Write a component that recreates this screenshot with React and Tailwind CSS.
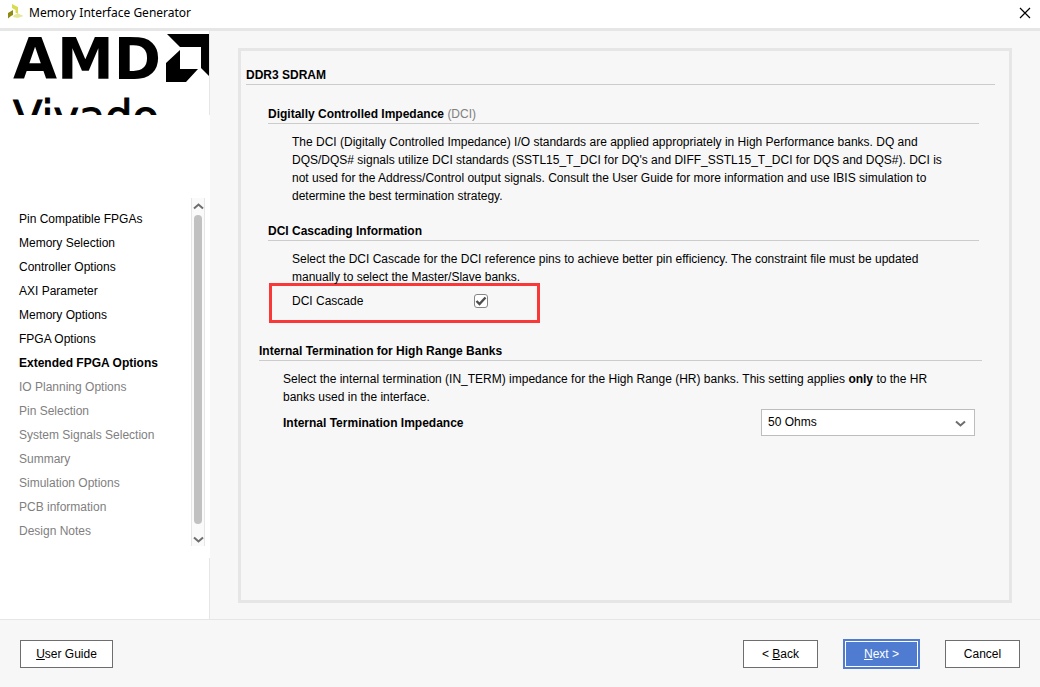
const steps = [
    'Pin Compatible FPGAs',
    'Memory Selection',
    'Controller Options',
    'AXI Parameter',
    'Memory Options',
    'FPGA Options',
    'Extended FPGA Options',
    'IO Planning Options',
    'Pin Selection',
    'System Signals Selection',
    'Summary',
    'Simulation Options',
    'PCB information',
    'Design Notes',
];
const currentStep = 6;

function Chevron({ up = false, className = '' }) {
    return (
        <svg width="11" height="7" viewBox="0 0 11 7" className={className} aria-hidden="true">
            <path
                d={up ? 'M1 5.5 L5.5 1.5 L10 5.5' : 'M1 1.5 L5.5 5.5 L10 1.5'}
                fill="none"
                stroke="#6e6e6e"
                strokeWidth="2"
            />
        </svg>
    );
}

function TitleBar() {
    return (
        <header className="flex h-[31px] items-center justify-between border-b-[3px] border-[#e6e6e6] bg-white pb-0.5 pl-2 pr-[7px]">
            <div className="flex items-center gap-[5px]">
                <svg width="16" height="18" viewBox="0 0 16 18" aria-hidden="true">
                    <path d="M4 0 L10 3 V10 L7.5 8.5 V6 L4 4 Z" fill="#d9dc52" />
                    <path d="M0 9 L5 6 V11 L3 12 L0 14.5 Z" fill="#8f8a12" />
                    <path d="M6 11 L10 9.5 L15.5 12 L9.5 14 L5 13 Z" fill="#e6e79a" />
                </svg>
                <h1 className="font-['Noto_Sans',sans-serif] text-[12px] leading-4">Memory Interface Generator</h1>
            </div>
            <button type="button" aria-label="Close" className="flex h-5 w-4 items-center justify-center">
                <svg width="12" height="12" viewBox="0 0 12 12" aria-hidden="true">
                    <path d="M1 1 L11 11 M11 1 L1 11" stroke="#000" strokeWidth="1.2" />
                </svg>
            </button>
        </header>
    );
}

function Logo() {
    return (
        <div className="h-[84px] overflow-hidden border-r border-[#e6e6e6]">
            <svg width="209" height="84" viewBox="0 0 209 84" role="img" aria-label="AMD Vivado">
                <text x="13" y="48" fontFamily="DejaVu Sans" fontWeight="700" fontSize="57">AMD</text>
                <path d="M167 3 H209 V45 L201 37 V16 H180 Z" />
                <path d="M180 19 V38 H198 L186 51 H166 V32 Z" />
                <text x="13" y="100" fontFamily="DejaVu Sans" fontSize="43" stroke="#000" strokeWidth="1">Vivado</text>
            </svg>
        </div>
    );
}

function Sidebar() {
    return (
        <aside className="flex w-[210px] shrink-0 flex-col bg-white">
            <Logo />
            <div className="mt-[83px] flex h-[348px] justify-between pr-[5px]">
                <nav className="pl-[19px] pt-[9px]">
                    <ol>
                        {steps.map((step, i) => (
                            <li
                                key={step}
                                aria-current={i === currentStep ? 'step' : undefined}
                                className={`leading-6 whitespace-nowrap ${i === currentStep ? 'font-bold' : ''} ${i > currentStep ? 'text-[#808080]' : ''}`}
                            >
                                {step}
                            </li>
                        ))}
                    </ol>
                </nav>
                <div className="flex w-[14px] flex-col items-center border-x border-[#e6e6e6] bg-[#fafafa]">
                    <Chevron up className="my-[5px]" />
                    <div className="w-2 flex-1 rounded-full bg-[#c1c1c1]" />
                    <Chevron className="mb-[3px] mt-[12px]" />
                </div>
            </div>
            <div className="mt-3 flex-1 border-r border-[#e6e6e6]" />
        </aside>
    );
}

function Section({ title, note, className, children }) {
    return (
        <section className={className}>
            <h3 className="border-b border-[#cccccc] font-bold leading-[18px]">
                {title}
                {note && <span className="font-normal text-[#808080]"> {note}</span>}
            </h3>
            {children}
        </section>
    );
}

function Content() {
    return (
        <main className="mx-7 mb-4 mt-[17px] flex-1 border-[3px] border-[#e6e6e6] pl-[5px] pr-[14px] pt-[15px]">
            <h2 className="border-b border-[#cccccc] font-bold leading-[18px]">DDR3 SDRAM</h2>

            <Section title="Digitally Controlled Impedance" note="(DCI)" className="ml-[22px] mr-4 mt-5">
                <p className="ml-6 mr-5 mt-[9px] leading-[18px]">
                    The DCI (Digitally Controlled Impedance) I/O standards are applied appropriately in High
                    Performance banks. DQ and DQS/DQS# signals utilize DCI standards (SSTL15_T_DCI for DQ's and
                    DIFF_SSTL15_T_DCI for DQS and DQS#). DCI is not used for the Address/Control output signals.
                    Consult the User Guide for more information and use IBIS simulation to determine the best
                    termination strategy.
                </p>
            </Section>

            <Section title="DCI Cascading Information" className="ml-[22px] mr-4 mt-[17px]">
                <p className="ml-6 mr-5 mt-[9px] leading-[18px]">
                    Select the DCI Cascade for the DCI reference pins to achieve better pin efficiency. The
                    constraint file must be updated manually to select the Master/Slave banks.
                </p>
                <div className="-mt-[3px] ml-px flex h-10 w-[271px] items-center border-[3px] border-[#fb3838] pb-1 pl-5">
                    <label htmlFor="cascade" className="w-[182px]">DCI Cascade</label>
                    <span className="relative flex">
                        <input
                            id="cascade"
                            type="checkbox"
                            defaultChecked
                            className="peer size-[14px] appearance-none rounded-[3px] border border-[#858585] bg-white"
                        />
                        <svg
                            viewBox="0 0 14 14"
                            className="pointer-events-none absolute inset-0 hidden size-[14px] peer-checked:block"
                            aria-hidden="true"
                        >
                            <path d="M2.5 7 L5.5 10 L11.5 3.5" fill="none" stroke="#4d4d4d" strokeWidth="2.4" />
                        </svg>
                    </span>
                </div>
            </Section>

            <Section title="Internal Termination for High Range Banks" className="ml-[13px] mr-[13px] mt-[19px]">
                <p className="ml-6 mr-6 mt-[9px] leading-[18px]">
                    Select the internal termination (IN_TERM) impedance for the High Range (HR) banks. This
                    setting applies <b>only</b> to the HR banks used in the interface.
                </p>
                <div className="ml-6 mr-[7px] mt-[3px] flex items-center justify-between">
                    <label htmlFor="impedance" className="font-bold">Internal Termination Impedance</label>
                    <span className="relative flex">
                        <select
                            id="impedance"
                            defaultValue="50"
                            className="h-[27px] w-[214px] appearance-none border border-[#bdbdbd] bg-white pb-0.5 pl-1.5"
                        >
                            <option value="40">40 Ohms</option>
                            <option value="50">50 Ohms</option>
                            <option value="60">60 Ohms</option>
                        </select>
                        <Chevron className="pointer-events-none absolute right-[9px] top-[11px]" />
                    </span>
                </div>
            </Section>
        </main>
    );
}

const buttonClass = 'h-7 border border-[#6e6e6e] bg-white';

function Footer() {
    return (
        <footer className="flex h-[68px] items-center justify-between border-t border-[#e6e6e6] px-5">
            <button type="button" className={`${buttonClass} w-[93px]`}>
                <u>U</u>ser Guide
            </button>
            <div className="flex items-center gap-[25px]">
                <button type="button" className={`${buttonClass} w-[75px]`}>
                    &lt; <u>B</u>ack
                </button>
                <button
                    type="button"
                    className="h-[30px] w-[77px] border-2 border-[#4f7cd1] bg-[#4f7cd1] text-white shadow-[inset_0_0_0_1px_white]"
                >
                    <u>N</u>ext &gt;
                </button>
                <button type="button" className={`${buttonClass} w-[75px]`}>
                    Cancel
                </button>
            </div>
        </footer>
    );
}

export default function App() {
    return (
        <div className="flex min-h-screen flex-col bg-[#f7f7f7] font-['Liberation_Sans',Arial,sans-serif] text-[12px] text-black">
            <TitleBar />
            <div className="flex flex-1">
                <Sidebar />
                <Content />
            </div>
            <Footer />
        </div>
    );
}
